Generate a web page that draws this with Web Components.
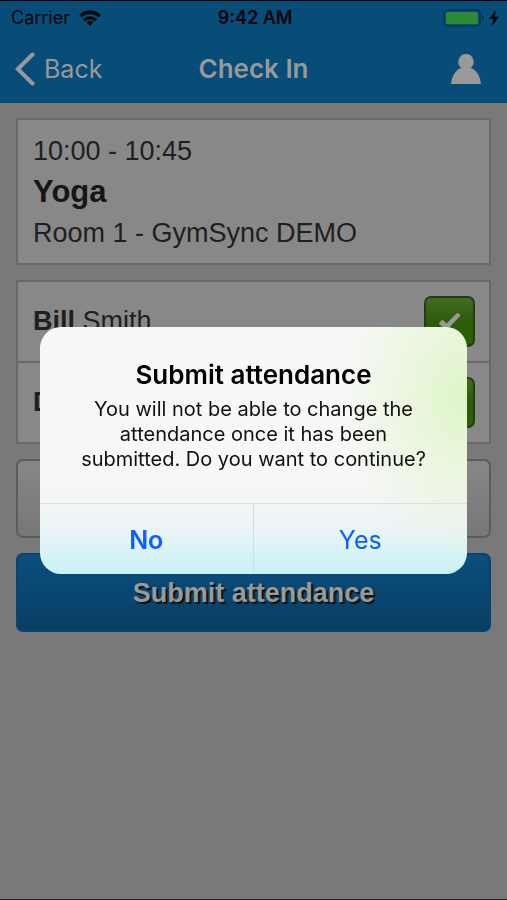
<!DOCTYPE html>
<html lang="en">
<head>
<meta charset="utf-8">
<meta name="viewport" content="width=device-width, initial-scale=1">
<title>Check In</title>
<style>
  html, body { margin: 0; min-height: 100vh; }
  body { background: #797979; font-family: "Liberation Sans", Arial, sans-serif; }
</style>
</head>
<body>
<check-in-app></check-in-app>
<script>
const define = (name, html, setup) => {
  const template = document.createElement('template');
  template.innerHTML = '<style>*{box-sizing:border-box}</style>' + html;
  customElements.define(name, class extends HTMLElement {
    constructor() {
      super();
      this.attachShadow({ mode: 'open' }).append(template.content.cloneNode(true));
    }
    connectedCallback() { if (setup) setup(this, this.shadowRoot); }
  });
};

define('status-bar', `
<style>
  :host { display: grid; grid-template-columns: 1fr auto 1fr; align-items: center; height: 34px; padding: 0 8px 0 11px; color: #020509; font: 400 18px/24px Inter, sans-serif; }
  .left, .right { display: flex; align-items: center; }
  .left { gap: 9px; }
  .right { justify-content: flex-end; gap: 4px; }
  .time { font-weight: 600; }
  svg { display: block; }
</style>
<div class="left"><span>Carrier</span>
  <svg width="22" height="16" viewBox="0 0 22 16" aria-hidden="true"><g fill="none" stroke="#020509" stroke-width="3.4"><path d="M1.4 6.1a13.8 13.8 0 0 1 19.2 0"/><path d="M5 10.200a8.800 8.800 0 0 1 12 0"/></g><path d="M11 15.800l-3.400-3.400a5 5 0 0 1 6.800 0z" fill="#020509"/></svg>
</div>
<span class="time">9:42 AM</span>
<div class="right">
  <svg width="42" height="18" viewBox="0 0 42 18" aria-hidden="true"><rect x="1" y="1" width="36" height="16" rx="3.5" fill="none" stroke="#063456" stroke-width="1.6"/><rect x="3" y="3" width="32" height="12" rx="1.5" fill="#2d8a35"/><path d="M39 6.5q2 .5 2 2.5t-2 2.5z" fill="#063456"/></svg>
  <svg width="10" height="16" viewBox="0 0 10 16" aria-hidden="true"><path d="M7 0L0 9h4.4L3 16l7-9.2H5.6z" fill="#020509"/></svg>
</div>`);

define('nav-bar', `
<style>
  :host { display: grid; grid-template-columns: 1fr auto 1fr; align-items: center; height: 68px; padding: 0 15px; color: #999; font: 400 25px/32px Inter, sans-serif; }
  h1 { margin: 0; font: inherit; font-weight: 600; font-size: 26px; }
  button { border: 0; padding: 0; background: none; color: inherit; font: inherit; display: flex; align-items: center; gap: 9px; }
  .profile { justify-self: end; padding-right: 11px; }
  svg { display: block; }
</style>
<button type="button"><svg width="20" height="34" viewBox="0 0 20 34" aria-hidden="true"><path d="M17.5 2.5L2.8 17l14.7 14.5" fill="none" stroke="#999" stroke-width="4" stroke-linecap="round"/></svg><slot name="back"></slot></button>
<h1><slot></slot></h1>
<button class="profile" type="button" aria-label="Profile"><svg width="30" height="30" viewBox="0 0 30 30" aria-hidden="true"><path d="M15 0a7.800 7.800 0 0 1 4.800 13.800C25 16 29 21 30 30H0c1-9 5-14 10.200-16.200A7.800 7.800 0 0 1 15 0z" fill="#999"/></svg></button>`);

define('class-card', `
<style>
  :host { display: block; border: 2px solid #696969; background: #888; padding: 14px 15px 13px; color: #1f1f1f; font-size: 27px; line-height: 34px; }
  h2 { margin: 5px 0; font-size: 31px; line-height: 38px; color: #161616; }
  p { margin: 0; }
</style>
<p><slot name="time"></slot></p><h2><slot></slot></h2><p><slot name="room"></slot></p>`);

define('attendee-row', `
<style>
  :host { display: block; }
  label { display: flex; align-items: center; justify-content: space-between; height: 79px; padding: 0 14px 0 15px; font-size: 27px; color: #1f1f1f; }
  input { appearance: none; display: grid; place-items: center; width: 51px; height: 51px; margin: 0; border: 2px solid #243c10; border-radius: 7px; background: #444; }
  input:checked { background: linear-gradient(#426b22, #2d5c08 50%, #2d6000); }
  input::before { content: ""; width: 22px; height: 18px; background: #999; clip-path: path("M0 11l4-4 4 4L18 1q3-1 4 2L9 17q-1 1-2 0z"); }
</style>
<label><span><slot></slot></span><input type="checkbox" checked></label>`);

define('attendee-list', `
<style>
  :host { display: grid; gap: 2px; border: 2px solid #696969; background: #696969; }
  ::slotted(*) { background: #888; }
</style><slot></slot>`);

define('action-button', `
<style>
  :host { display: block; }
  button { display: block; width: 100%; min-height: 79px; border: 2px solid #5c5c5c; border-radius: 7px; background: linear-gradient(#878787, #777); color: #999; font: 700 27px/32px "Liberation Sans", Arial, sans-serif; text-shadow: 2px 2px 1px #111; }
  :host([primary]) button { border-color: #08446e; background: linear-gradient(#0a4f7e, #083e63); }
</style>
<button type="button"><slot></slot></button>`, (host, root) => {
  if (host.hasAttribute('label')) root.querySelector('button').setAttribute('aria-label', host.getAttribute('label'));
});

define('alert-dialog', `
<style>
  :host { position: fixed; inset: 0; display: grid; align-content: center; padding: 1px 40px 0; font-family: Inter, sans-serif; }
  section { overflow: hidden; border-radius: 21px; background:
    radial-gradient(ellipse 130px 160px at 100% 28%, #dff5c8, #dff5c800),
    linear-gradient(#f8f8f8 0 55%, #f5f5f6 70%, #e7f4f6 84%, #c9f1f6); text-align: center; color: #000; }
  .message { padding: 32px 30px 31px; }
  h2 { margin: 0 0 6px; font-size: 26px; line-height: 32px; font-weight: 600; }
  p { margin: 0; font-size: 20px; line-height: 25px; color: #111; }
  .actions { display: grid; grid-template-columns: 1fr 1fr; border-top: 1px solid #d8e3e5; }
  button { height: 70px; border: 0; padding: 2px 0 0; background: none; color: #0b60ff; font: 400 25px/32px Inter, sans-serif; }
  button:first-child { font-weight: 600; border-right: 1px solid #c5e3e6; }
</style>
<section role="alertdialog" aria-labelledby="title" aria-describedby="message">
  <div class="message"><h2 id="title"><slot name="title"></slot></h2><p id="message"><slot></slot></p></div>
  <div class="actions"><button type="button">No</button><button type="button">Yes</button></div>
</section>`);

define('check-in-app', `
<style>
  :host { display: block; box-sizing: border-box; min-height: 100vh; border-bottom: 1px solid #222; }
  header { background: #084c78; border-top: 1px solid #000; }
  main { display: grid; gap: 15px; padding: 15px 16px; }
</style>
<header><status-bar></status-bar><nav-bar><span slot="back">Back</span>Check In</nav-bar></header>
<main>
  <class-card><span slot="time">10:00 - 10:45</span>Yoga<span slot="room">Room 1 - GymSync DEMO</span></class-card>
  <attendee-list><attendee-row><b>Bill</b> Smith</attendee-row><attendee-row><b>D</b></attendee-row></attendee-list>
  <action-button label="Add attendee"></action-button>
  <action-button primary>Submit attendance</action-button>
</main>
<alert-dialog><span slot="title">Submit attendance</span>You will not be able to change the attendance once it has been submitted. Do you want to continue?</alert-dialog>`);
</script>
</body>
</html>
